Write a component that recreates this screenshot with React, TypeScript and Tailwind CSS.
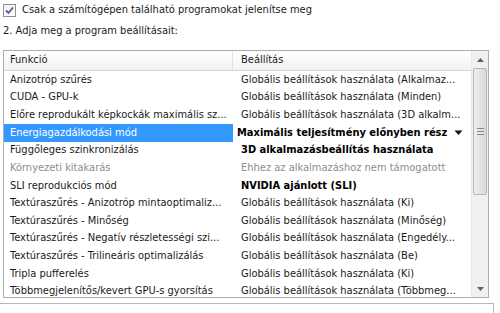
import React from "react";

type Row = {
  name: string;
  value: string;
  bold?: boolean;
  muted?: boolean;
  selected?: boolean;
};

const rows: Row[] = [
  { name: "Anizotróp szűrés", value: "Globális beállítások használata (Alkalmaz..." },
  { name: "CUDA - GPU-k", value: "Globális beállítások használata (Minden)" },
  { name: "Előre reprodukált képkockák maximális sz...", value: "Globális beállítások használata (3D alkalm..." },
  { name: "Energiagazdálkodási mód", value: "Maximális teljesítmény előnyben rész", bold: true, selected: true },
  { name: "Függőleges szinkronizálás", value: "3D alkalmazásbeállítás használata", bold: true },
  { name: "Környezeti kitakarás", value: "Ehhez az alkalmazáshoz nem támogatott", muted: true },
  { name: "SLI reprodukciós mód", value: "NVIDIA ajánlott (SLI)", bold: true },
  { name: "Textúraszűrés - Anizotróp mintaoptimaliz...", value: "Globális beállítások használata (Ki)" },
  { name: "Textúraszűrés - Minőség", value: "Globális beállítások használata (Minőség)" },
  { name: "Textúraszűrés - Negatív részletességi szi...", value: "Globális beállítások használata (Engedély..." },
  { name: "Textúraszűrés - Trilineáris optimalizálás", value: "Globális beállítások használata (Be)" },
  { name: "Tripla pufferelés", value: "Globális beállítások használata (Ki)" },
  { name: "Többmegjelenítős/kevert GPU-s gyorsítás", value: "Globális beállítások használata (Többmeg..." },
];

const App = () => {
  return (
    <div className="w-[500px] h-[313px] bg-white overflow-hidden text-[11px] text-[#1a1a1a] font-['DejaVu_Sans_Condensed','Liberation_Sans',sans-serif]">
      {/* Checkbox line */}
      <div className="flex items-center gap-[6px] pl-[3px] pt-[3px] h-[17px]">
        <div className="w-[13px] h-[13px] border border-[#8f8f8f] bg-gradient-to-b from-[#f2f2f2] to-[#ffffff] flex items-center justify-center">
          <svg width="9" height="9" viewBox="0 0 9 9">
            <path d="M1 4.5 L3.5 7 L8 1.5" fill="none" stroke="#4a5f97" strokeWidth="1.8" />
          </svg>
        </div>
        <span>Csak a számítógépen található programokat jelenítse meg</span>
      </div>

      <div className="pl-[3px] pt-[6px] h-[33px]">2. Adja meg a program beállításait:</div>

      {/* List */}
      <div className="ml-[3px] w-[486px] h-[248px] border border-[#adadad] flex overflow-hidden">
        <div className="flex-1 flex flex-col">
          <div className="h-[20px] flex items-center bg-gradient-to-b from-[#ffffff] to-[#f1f2f4] border-b border-[#d5d5d5] shrink-0">
            <div className="w-[229px] pl-[6px] border-r border-[#e3e3e3] h-full flex items-center">Funkció</div>
            <div className="flex-1 pl-[8px]">Beállítás</div>
          </div>
          {rows.map((r) => (
            <div key={r.name} className="h-[17.67px] flex items-center shrink-0">
              <div
                className={
                  r.selected
                    ? "w-[229px] h-full pl-[6px] flex items-center bg-[#3399ff] text-white whitespace-nowrap overflow-hidden"
                    : r.muted
                    ? "w-[229px] h-full pl-[6px] flex items-center text-[#8d8d8d] whitespace-nowrap overflow-hidden"
                    : "w-[229px] h-full pl-[6px] flex items-center whitespace-nowrap overflow-hidden"
                }
              >
                {r.name}
              </div>
              {r.selected ? (
                <div className="flex-1 h-full flex items-center bg-white pl-[4px] pr-[4px]">
                  <span className="flex-1 font-bold text-black whitespace-nowrap">{r.value}</span>
                  <svg width="9" height="6" viewBox="0 0 9 6" className="mr-[4px]">
                    <path d="M0.5 0.5 L8.5 0.5 L4.5 5 Z" fill="#111" />
                  </svg>
                </div>
              ) : (
                <div
                  className={
                    r.bold
                      ? "flex-1 pl-[8px] font-bold text-black whitespace-nowrap overflow-hidden"
                      : r.muted
                      ? "flex-1 pl-[8px] text-[#8d8d8d] whitespace-nowrap overflow-hidden"
                      : "flex-1 pl-[8px] whitespace-nowrap overflow-hidden"
                  }
                >
                  {r.value}
                </div>
              )}
            </div>
          ))}
        </div>

        {/* Scrollbar */}
        <div className="w-[17px] shrink-0 bg-[#f0f0f0] border-l border-[#e8e8e8] flex flex-col">
          <div className="h-[17px] flex items-center justify-center">
            <svg width="7" height="4" viewBox="0 0 7 4">
              <path d="M0 4 L3.5 0 L7 4 Z" fill="#606060" />
            </svg>
          </div>
          <div className="h-[127px] mx-[1px] rounded-[2px] border border-[#b5b5b5] bg-gradient-to-r from-[#eeeeee] to-[#d9d9d9] flex flex-col items-center justify-center gap-[2px]">
            <div className="w-[7px] h-px bg-[#8a8a8a]" />
            <div className="w-[7px] h-px bg-[#8a8a8a]" />
            <div className="w-[7px] h-px bg-[#8a8a8a]" />
          </div>
          <div className="flex-1" />
          <div className="h-[17px] flex items-center justify-center">
            <svg width="7" height="4" viewBox="0 0 7 4">
              <path d="M0 0 L3.5 4 L7 0 Z" fill="#606060" />
            </svg>
          </div>
        </div>
      </div>

      {/* Next panel edge */}
      <div className="mt-[5px] w-[494px] h-[20px] border-t border-r border-[#b9b9b9]" />
    </div>
  );
};

export default App;
